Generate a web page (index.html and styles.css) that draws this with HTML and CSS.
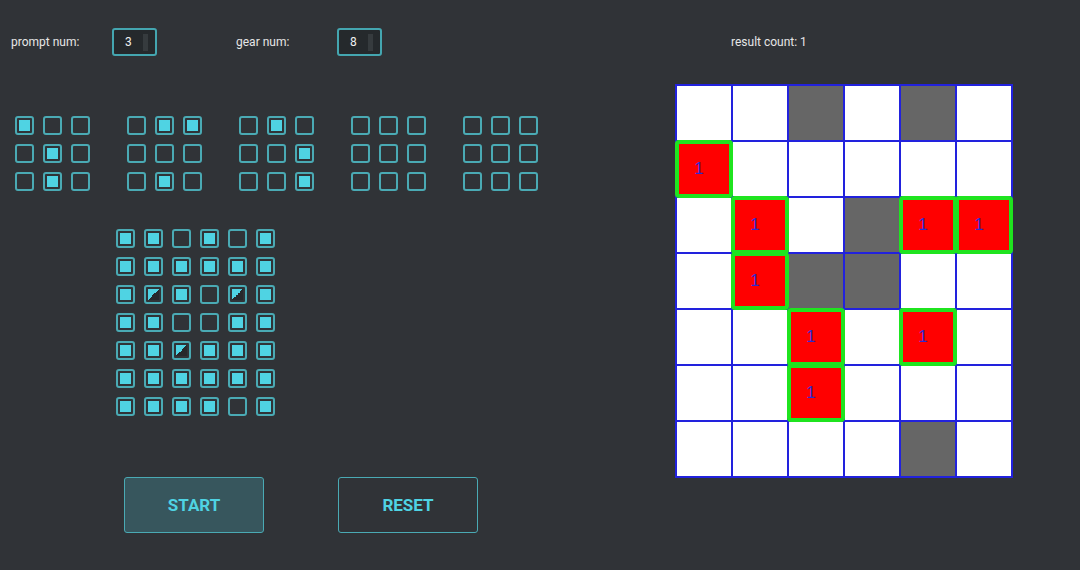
FILE: index.html
```html
<!DOCTYPE html>
<html lang="en">
<head>
  <meta charset="UTF-8" />
  <title>Gear Puzzle</title>
  <link rel="stylesheet" href="styles.css">
</head>
<body>
  <div class="app">
    <div class="left-panel">
      <div class="controls">
        <label class="field-label">prompt num:</label>
        <div class="num-input"><span>3</span><i class="spin"></i></div>
        <label class="field-label gear-label">gear num:</label>
        <div class="num-input"><span>8</span><i class="spin"></i></div>
      </div>

      <div class="prompts">
        <div class="box-grid three">
          <b class="box on"></b><b class="box"></b><b class="box"></b>
          <b class="box"></b><b class="box on"></b><b class="box"></b>
          <b class="box"></b><b class="box on"></b><b class="box"></b>
        </div>
        <div class="box-grid three">
          <b class="box"></b><b class="box on"></b><b class="box on"></b>
          <b class="box"></b><b class="box"></b><b class="box"></b>
          <b class="box"></b><b class="box on"></b><b class="box"></b>
        </div>
        <div class="box-grid three">
          <b class="box"></b><b class="box on"></b><b class="box"></b>
          <b class="box"></b><b class="box"></b><b class="box on"></b>
          <b class="box"></b><b class="box"></b><b class="box on"></b>
        </div>
        <div class="box-grid three">
          <b class="box"></b><b class="box"></b><b class="box"></b>
          <b class="box"></b><b class="box"></b><b class="box"></b>
          <b class="box"></b><b class="box"></b><b class="box"></b>
        </div>
        <div class="box-grid three">
          <b class="box"></b><b class="box"></b><b class="box"></b>
          <b class="box"></b><b class="box"></b><b class="box"></b>
          <b class="box"></b><b class="box"></b><b class="box"></b>
        </div>
      </div>

      <div class="board">
        <div class="box-grid six">
          <b class="box on"></b><b class="box on"></b><b class="box"></b><b class="box on"></b><b class="box"></b><b class="box on"></b>
          <b class="box on"></b><b class="box on"></b><b class="box on"></b><b class="box on"></b><b class="box on"></b><b class="box on"></b>
          <b class="box on"></b><b class="box half"></b><b class="box on"></b><b class="box"></b><b class="box half"></b><b class="box on"></b>
          <b class="box on"></b><b class="box on"></b><b class="box"></b><b class="box"></b><b class="box on"></b><b class="box on"></b>
          <b class="box on"></b><b class="box on"></b><b class="box half"></b><b class="box on"></b><b class="box on"></b><b class="box on"></b>
          <b class="box on"></b><b class="box on"></b><b class="box on"></b><b class="box on"></b><b class="box on"></b><b class="box on"></b>
          <b class="box on"></b><b class="box on"></b><b class="box on"></b><b class="box on"></b><b class="box"></b><b class="box on"></b>
        </div>
      </div>

      <div class="actions">
        <button class="btn btn-start">START</button>
        <button class="btn">RESET</button>
      </div>
    </div>

    <div class="right-panel">
      <div class="result">result count: 1</div>
      <div class="result-grid">
        <div class="cell"></div><div class="cell"></div><div class="cell grey"></div><div class="cell"></div><div class="cell grey"></div><div class="cell"></div>
        <div class="cell hit">1</div><div class="cell"></div><div class="cell"></div><div class="cell"></div><div class="cell"></div><div class="cell"></div>
        <div class="cell"></div><div class="cell hit">1</div><div class="cell"></div><div class="cell grey"></div><div class="cell hit">1</div><div class="cell hit">1</div>
        <div class="cell"></div><div class="cell hit">1</div><div class="cell grey"></div><div class="cell grey"></div><div class="cell"></div><div class="cell"></div>
        <div class="cell"></div><div class="cell"></div><div class="cell hit">1</div><div class="cell"></div><div class="cell hit">1</div><div class="cell"></div>
        <div class="cell"></div><div class="cell"></div><div class="cell hit">1</div><div class="cell"></div><div class="cell"></div><div class="cell"></div>
        <div class="cell"></div><div class="cell"></div><div class="cell"></div><div class="cell"></div><div class="cell grey"></div><div class="cell"></div>
      </div>
    </div>
  </div>
</body>
</html>
```

FILE: styles.css
```css
:root {
  --bg: #303337;
  --teal: #4aaab4;
  --cyan: #4fd3e3;
  --text: #e6e6e6;
}

* {
  margin: 0;
  padding: 0;
  box-sizing: border-box;
}
body {
  background: var(--bg);
  color: var(--text);
  font-family: Roboto, "Liberation Sans", sans-serif;
  width: 1080px;
  height: 570px;
  overflow: hidden;
}
.app {
  display: flex;
}

/* left side: inputs, prompt patterns, board, buttons */
.left-panel {
  width: 675px;
  padding-top: 28px;
}
.controls {
  display: flex;
  align-items: center;
  padding-left: 11px;
  height: 28px;
}
.field-label {
  font-size: 12px;
  width: 101px;
}
.gear-label {
  margin-left: 79px;
}
.num-input {
  width: 45px;
  height: 28px;
  border: 2px solid #44a6b0;
  border-radius: 3px;
  background: #25292c;
  display: flex;
  align-items: center;
  padding-left: 11px;
  font-size: 12px;
  color: #f0f0f0;
}
.num-input .spin {
  width: 5px;
  height: 17px;
  margin-left: 11px;
  background: #363b3e;
}

.prompts {
  display: flex;
  gap: 37px;
  margin-top: 60px;
  padding-left: 15px;
}
.box-grid {
  display: grid;
  gap: 9px;
}
.box-grid.three {
  grid-template-columns: repeat(3, 19px);
  grid-auto-rows: 19px;
}
.box-grid.six {
  grid-template-columns: repeat(6, 19px);
  grid-auto-rows: 19px;
}
.box {
  display: block;
  width: 19px;
  height: 19px;
  border: 2px solid var(--teal);
  border-radius: 3px;
  padding: 2px;
}
.box::after {
  content: '';
  display: block;
  width: 100%;
  height: 100%;
}
.box.on::after {
  background: var(--cyan);
}
.box.half::after {
  background: linear-gradient(to bottom right, var(--cyan) 50%, #26292c 50%);
}

.board {
  margin-top: 38px;
  padding-left: 116px;
}

.actions {
  display: flex;
  gap: 74px;
  margin-top: 61px;
  padding-left: 124px;
}
.btn {
  width: 140px;
  height: 56px;
  border: 1px solid var(--teal);
  border-radius: 3px;
  background: transparent;
  color: var(--cyan);
  font-family: Roboto, "Liberation Sans", sans-serif;
  font-weight: 700;
  font-size: 17px;
}
.btn-start {
  background: #37565d;
}

/* right side: result board */
.right-panel {
  padding-top: 35px;
}
.result {
  font-size: 12px;
  margin-left: 56px;
  height: 14px;
  line-height: 14px;
}
.result-grid {
  margin-top: 35px;
  display: grid;
  grid-template-columns: repeat(6, 54px);
  grid-auto-rows: 54px;
  gap: 2px;
  padding: 2px;
  background: #2222dd;
  width: max-content;
}
.cell {
  background: #fff;
}
.cell.grey {
  background: #666;
}
.cell.hit {
  background: #ff0000;
  outline: 4px solid #1fe41f;
  outline-offset: -2px;
  border-radius: 2px;
  display: flex;
  align-items: center;
  justify-content: center;
  padding-right: 10px;
  font-family: "Liberation Sans", sans-serif;
  font-size: 17px;
  color: #2c2cd0;
}
```
